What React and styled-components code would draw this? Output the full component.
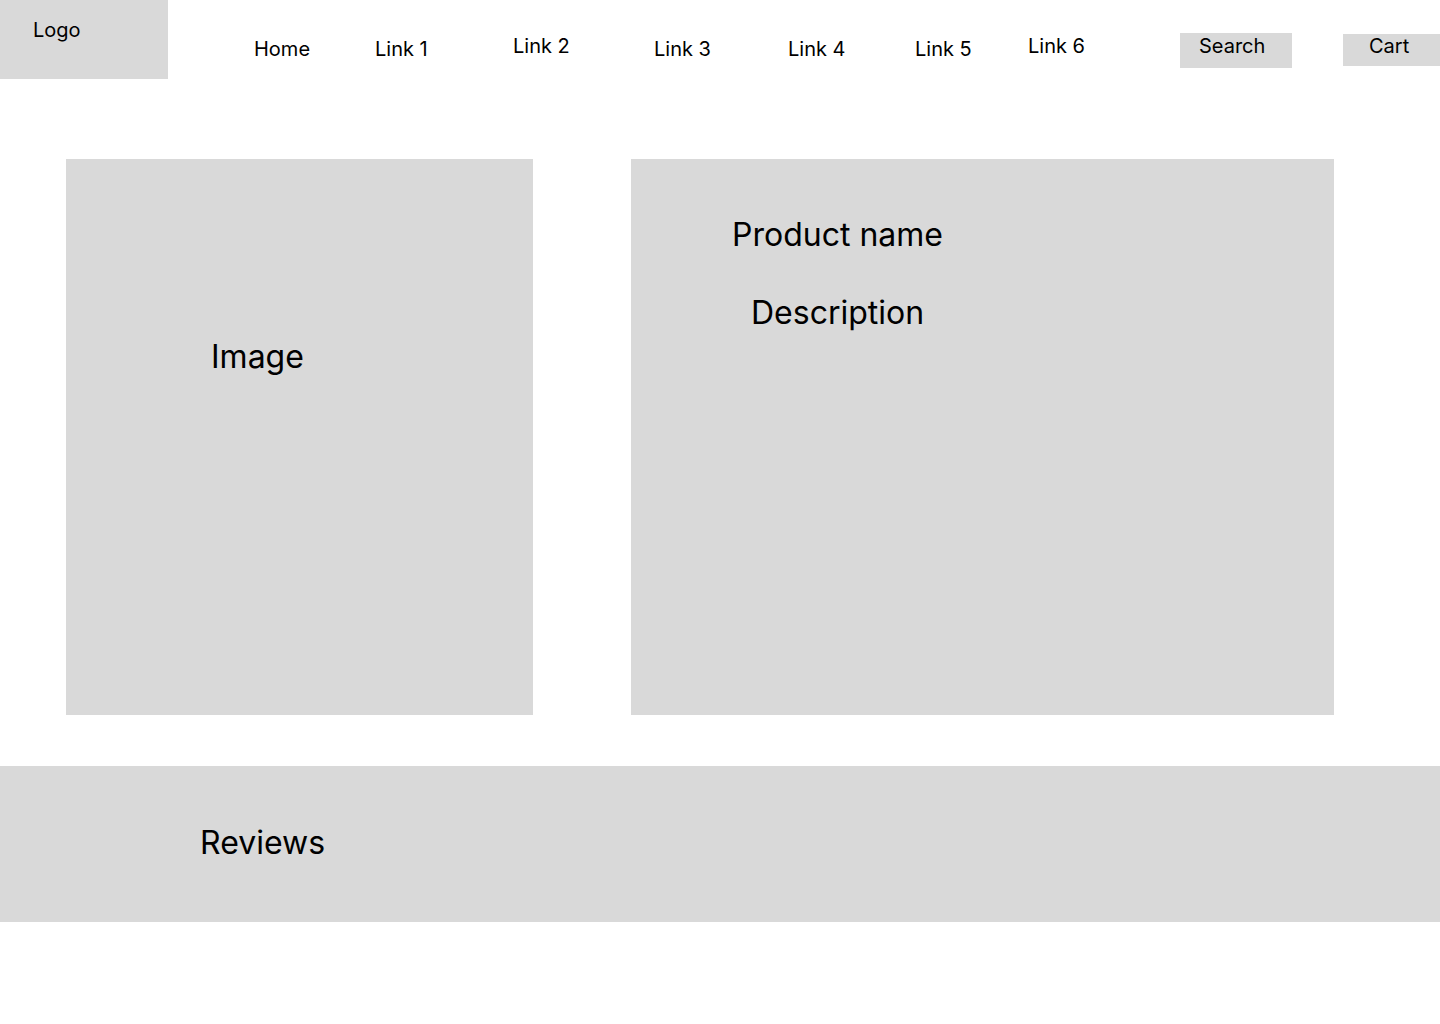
import React from 'react'
import styled, { createGlobalStyle } from 'styled-components'

const GlobalStyle = createGlobalStyle`
    body {
        margin: 0;
        background: #fff;
        font-family: Inter, "Noto Sans", sans-serif;
        color: #000;
    }
`

const Page = styled.div`
    width: 1440px;
    min-height: 1024px;
`

const Header = styled.header`
    display: flex;
    align-items: flex-start;
    height: 79px;
`

const Logo = styled.div`
    width: 168px;
    height: 79px;
    box-sizing: border-box;
    padding: 18px 0 0 33px;
    background: #d9d9d9;
    font-size: 20px;
    line-height: 24px;
`

const Nav = styled.nav`
    display: flex;
    align-items: flex-start;
    margin-left: 86px;
`

const NavLink = styled.a`
    display: block;
    width: ${p => p.$w}px;
    margin-top: ${p => p.$top}px;
    font-size: 20px;
    line-height: 24px;
    color: #000;
    text-decoration: none;
`

const Tool = styled.div`
    box-sizing: border-box;
    width: ${p => p.$w}px;
    height: ${p => p.$h}px;
    margin-top: ${p => p.$top}px;
    margin-left: ${p => p.$gap || 0}px;
    padding: ${p => p.$pt}px 0 0 ${p => p.$pl}px;
    background: #d9d9d9;
    font-size: 20px;
    line-height: 24px;
`

const Main = styled.main`
    display: flex;
    gap: 98px;
    padding: 80px 0 0 66px;
`

const Panel = styled.section`
    box-sizing: border-box;
    width: ${p => p.$w}px;
    height: 556px;
    padding: ${p => p.$pt}px 0 0 ${p => p.$pl}px;
    background: #d9d9d9;
`

const Big = styled.div`
    font-size: 32px;
    line-height: 39px;
    margin-left: ${p => p.$indent || 0}px;
    margin-top: ${p => p.$top || 0}px;
`

const Reviews = styled.section`
    box-sizing: border-box;
    height: 156px;
    margin-top: 51px;
    padding: 57px 0 0 200px;
    background: #d9d9d9;
`

const links = [
    { label: 'Home', w: 121, top: 37 },
    { label: 'Link 1', w: 138, top: 37 },
    { label: 'Link 2', w: 141, top: 34 },
    { label: 'Link 3', w: 134, top: 37 },
    { label: 'Link 4', w: 127, top: 37 },
    { label: 'Link 5', w: 113, top: 37 },
    { label: 'Link 6', w: 152, top: 34 },
]

export default function App() {
    return (
        <Page>
            <GlobalStyle />
            <Header>
                <Logo>Logo</Logo>
                <Nav>
                    {links.map(l => (
                        <NavLink key={l.label} href="#" $w={l.w} $top={l.top}>
                            {l.label}
                        </NavLink>
                    ))}
                    <Tool $w={112} $h={35} $top={33} $pt={1} $pl={19}>
                        Search
                    </Tool>
                    <Tool $w={97} $h={32} $top={34} $gap={51} $pt={0} $pl={26}>
                        Cart
                    </Tool>
                </Nav>
            </Header>
            <Main>
                <Panel $w={467} $pt={178} $pl={145}>
                    <Big>Image</Big>
                </Panel>
                <Panel $w={703} $pt={56} $pl={101}>
                    <Big>Product name</Big>
                    <Big $indent={19} $top={39}>Description</Big>
                </Panel>
            </Main>
            <Reviews>
                <Big>Reviews</Big>
            </Reviews>
        </Page>
    )
}
